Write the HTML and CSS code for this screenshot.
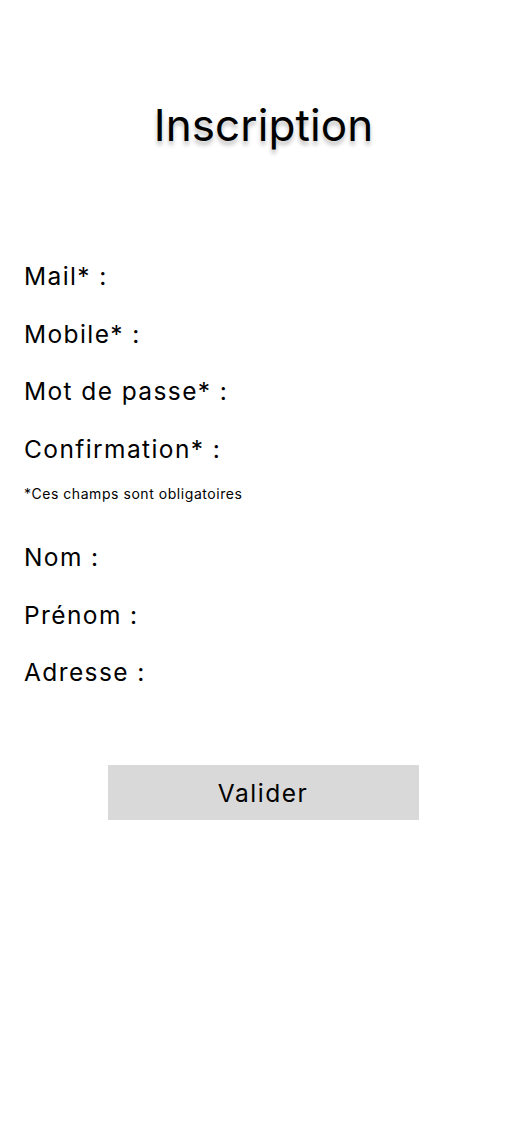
FILE: index.html
```html
<!DOCTYPE html>
<html lang="fr">
<head>
<meta charset="utf-8">
<title>Inscription</title>
<link rel="stylesheet" href="styles.css">
</head>
<body>
<main class="page">
  <h1 class="title">Inscription</h1>
  <div class="fields">
    <div class="group">
      <div class="label">Mail* :</div>
      <div class="label">Mobile* :</div>
      <div class="label">Mot de passe* :</div>
      <div class="label">Confirmation* :</div>
    </div>
    <p class="note">*Ces champs sont obligatoires</p>
    <div class="group">
      <div class="label">Nom :</div>
      <div class="label">Prénom :</div>
      <div class="label">Adresse :</div>
    </div>
  </div>
  <div class="actions">
    <button class="submit" type="button">Valider</button>
  </div>
</main>
</body>
</html>
```

FILE: styles.css
```css
html, body {
  margin: 0;
  padding: 0;
  background: #ffffff;
}
body {
  font-family: Inter, "Noto Sans", sans-serif;
  color: #000000;
  width: 523px;
  height: 1140px;
}
.page {
  display: flex;
  flex-direction: column;
  padding-top: 98px;
}
.title {
  margin: 0;
  font-size: 44px;
  line-height: 54px;
  font-weight: 400;
  text-align: center;
  padding-left: 4px;
  letter-spacing: 0.1px;
  text-shadow: 0 4px 4px rgba(0, 0, 0, 0.25);
}
.fields {
  display: flex;
  flex-direction: column;
  padding-left: 24px;
  margin-top: 110px;
}
.group {
  display: flex;
  flex-direction: column;
  gap: 28.7px;
}
.label {
  font-size: 24.5px;
  line-height: 29px;
  letter-spacing: 1.4px;
}
.note {
  margin: 21px 0 41px;
  font-size: 14px;
  line-height: 17px;
  letter-spacing: 0.55px;
}
.actions {
  display: flex;
  justify-content: center;
  margin-top: 78px;
  padding-left: 3px;
}
.submit {
  width: 311px;
  height: 55px;
  border: none;
  background: #d9d9d9;
  font-family: Inter, "Noto Sans", sans-serif;
  font-size: 24.5px;
  letter-spacing: 1.5px;
  color: #000000;
  padding: 0;
}
```
